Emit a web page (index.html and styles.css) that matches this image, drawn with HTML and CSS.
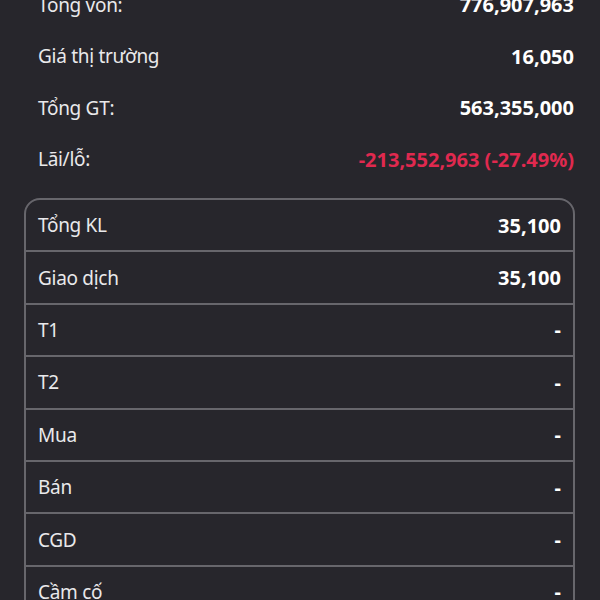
FILE: index.html
```html
<!DOCTYPE html>
<html lang="vi">
<head>
    <meta charset="UTF-8">
    <meta name="viewport" content="width=device-width, initial-scale=1.0">
    <title>Chi tiết mã</title>
    <link rel="stylesheet" href="styles.css">
</head>
<body>

    <div class="summary">
        <div class="summary-row"><span>Tổng vốn:</span><b>776,907,963</b></div>
        <div class="summary-row"><span>Giá thị trường</span><b>16,050</b></div>
        <div class="summary-row"><span>Tổng GT:</span><b>563,355,000</b></div>
        <div class="summary-row"><span>Lãi/lỗ:</span><b class="loss">-213,552,963 (-27.49%)</b></div>
    </div>

    <div class="volume-table">
        <div class="volume-row"><span>Tổng KL</span><b>35,100</b></div>
        <div class="volume-row"><span>Giao dịch</span><b>35,100</b></div>
        <div class="volume-row"><span>T1</span><b>-</b></div>
        <div class="volume-row"><span>T2</span><b>-</b></div>
        <div class="volume-row"><span>Mua</span><b>-</b></div>
        <div class="volume-row"><span>Bán</span><b>-</b></div>
        <div class="volume-row"><span>CGD</span><b>-</b></div>
        <div class="volume-row"><span>Cầm cố</span><b>-</b></div>
    </div>

</body>
</html>
```

FILE: styles.css
```css
body {
    margin: 0;
    background: #27262c;
    color: #e9e9eb;
    font-family: "Noto Sans", Arial, sans-serif;
    font-size: 19px;
    letter-spacing: -0.3px;
    overflow: hidden;
}
b {
    font-size: 20px;
    font-weight: 700;
    letter-spacing: 0;
    color: #ffffff;
}
.summary {
    margin-top: -21px;
    padding: 0 26px 0 38px;
}
.summary-row {
    height: 51.5px;
    display: flex;
    justify-content: space-between;
    align-items: center;
}
.loss {
    color: #e0294f;
}
.volume-table {
    margin: 13px 25px 0 24px;
    border: 2px solid #67666c;
    border-radius: 16px;
}
.volume-row {
    height: 50.4px;
    padding: 0 12px;
    display: flex;
    justify-content: space-between;
    align-items: center;
    border-top: 2px solid #67666c;
}
.volume-row:first-child {
    border-top: none;
}
```
